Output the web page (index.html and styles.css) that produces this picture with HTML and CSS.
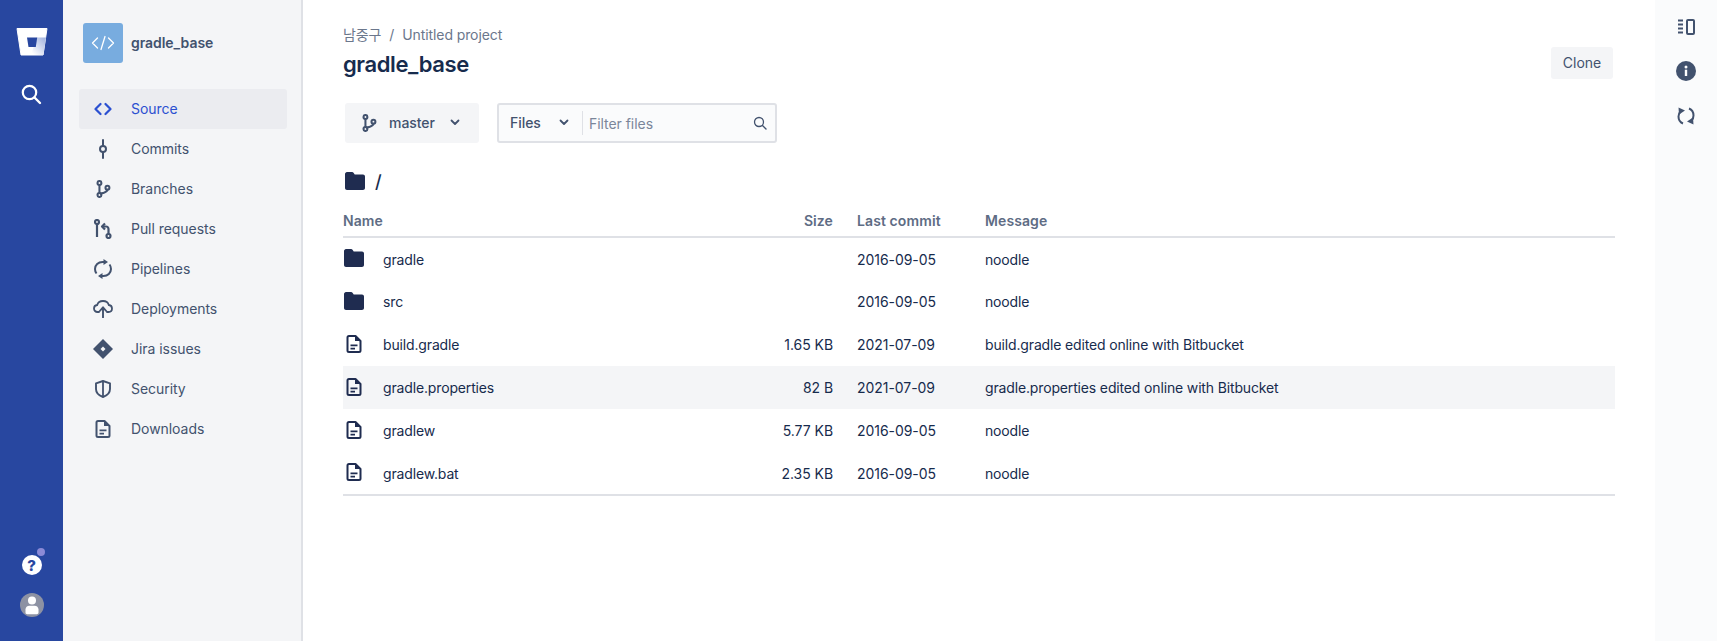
FILE: index.html
```html
<!DOCTYPE html>
<html lang="en">
<head>
<meta charset="utf-8">
<title>gradle_base</title>
<link rel="stylesheet" href="styles.css">
</head>
<body>
<svg class="defs" width="0" height="0">
  <defs>
    <symbol id="folder" viewBox="0 0 20 18"><path d="M0 2.200C0 1 .9 0 2 0h5c.8 0 1.300.4 1.700 1l1 1.600H18c1.100 0 2 .9 2 2V16c0 1.100-.9 2-2 2H2c-1.100 0-2-.9-2-2z" fill="currentColor"/></symbol>
    <symbol id="file" viewBox="0 0 16 18"><path d="M3 1h6.500L14.500 6v9.500c0 .8-.7 1.500-1.500 1.500H3c-.8 0-1.500-.7-1.500-1.500v-13C1.500 1.700 2.200 1 3 1z" fill="none" stroke="currentColor" stroke-width="2" stroke-linejoin="round"/><path d="M9 1v5h5.500z" fill="currentColor"/><path d="M4.500 9.500h7v1.800h-7zM4.500 12.800h4.500v1.800H4.500z" fill="currentColor"/></symbol>
    <symbol id="branch" viewBox="0 0 18 20"><g fill="none" stroke="currentColor" stroke-width="2.300"><circle cx="5" cy="3.200" r="2.200"/><circle cx="5" cy="16.800" r="2.200"/><circle cx="14" cy="8.500" r="2.200"/><path d="M5 5.400v9.200M14 10.700c0 2.800-3 3.300-5 3.800-1.500.4-3 .8-3.600 1"/></g></symbol>
  </defs>
</svg>
<div class="app">
  <nav class="rail">
    <div class="rail-top">
      <svg class="logo" width="32" height="30" viewBox="0 0 32 30">
        <defs><linearGradient id="lg" x1="1" y1="0" x2="0.150" y2="0.950"><stop offset="0" stop-color="#9fb0dd"/><stop offset="1" stop-color="#fff"/></linearGradient></defs>
        <path d="M1 1.500h30l-4 26.500H5z" fill="#fff" stroke="#fff" stroke-linejoin="round"/>
        <path d="M20.800 10.500h9.200l-2.600 17.500H15z" fill="url(#lg)"/>
        <path d="M11 10.500h10.200l-1.400 9.500h-7.300z" fill="#2847a0"/>
      </svg>
      <svg class="rail-search" width="22" height="22" viewBox="0 0 22 22"><circle cx="9.500" cy="9.500" r="6.700" fill="none" stroke="#fff" stroke-width="2.200"/><path d="M14.500 14.500l5.500 5.500" stroke="#fff" stroke-width="2.400" stroke-linecap="round"/></svg>
    </div>
    <div class="rail-bottom">
      <div class="help"><span class="help-q">?</span><span class="help-dot"></span></div>
      <div class="avatar"><svg width="24" height="24" viewBox="0 0 24 24"><circle cx="12" cy="7.500" r="4" fill="#fff"/><path d="M5.500 16.500c0-2.300 1.700-3.700 4-3.700h5c2.300 0 4 1.400 4 3.700v3c0 1-.8 1.700-1.700 1.700H7.200c-1 0-1.700-.7-1.700-1.700z" fill="#fff"/></svg></div>
    </div>
  </nav>

  <aside class="sidebar">
    <div class="repo">
      <div class="repo-icon"><svg width="24" height="16" viewBox="0 0 24 16"><path d="M6.500 3L1.500 8l5 5M17.500 3l5 5-5 5M14 1.500L10 14.500" fill="none" stroke="#fff" stroke-width="1.300" stroke-linecap="round" stroke-linejoin="round"/></svg></div>
      <span class="repo-name">gradle_base</span>
    </div>
    <ul class="menu">
      <li class="menu-item active"><span class="mi"><svg width="18" height="14" viewBox="0 0 18 14"><path d="M6.500 2L1.500 7l5 5M11.500 2l5 5-5 5" fill="none" stroke="currentColor" stroke-width="2.200" stroke-linecap="round" stroke-linejoin="round"/></svg></span>Source</li>
      <li class="menu-item"><span class="mi"><svg width="10" height="20" viewBox="0 0 10 20"><path d="M5 1v5.500M5 13.500V19" stroke="currentColor" stroke-width="2" stroke-linecap="round"/><circle cx="5" cy="10" r="3" fill="none" stroke="currentColor" stroke-width="2"/></svg></span>Commits</li>
      <li class="menu-item"><span class="mi"><svg width="16" height="18" viewBox="0 0 18 20"><use href="#branch"/></svg></span>Branches</li>
      <li class="menu-item"><span class="mi"><svg width="18" height="20" viewBox="0 0 18 20"><g fill="none" stroke="currentColor" stroke-width="2.200"><circle cx="3" cy="3" r="2"/><path d="M3 5v13"/><circle cx="14.500" cy="17" r="2"/><path d="M14.500 15v-5c0-1.500-1-2.500-2.500-2.500H8.500"/><path d="M11 4.500l-3 3 3 3" stroke-linejoin="round"/></g></svg></span>Pull requests</li>
      <li class="menu-item"><span class="mi"><svg width="18" height="20" viewBox="0 0 18 20"><g fill="none" stroke="currentColor" stroke-width="2"><path d="M2.500 14.500C1.500 13.200 1 11.700 1 10c0-4 3.200-7 7.500-7h2"/><path d="M15.500 5.500c1 1.300 1.500 2.800 1.500 4.500 0 4-3.200 7-7.500 7h-2"/></g><path d="M9.500 0l4.500 3-4.500 3zM8.500 14l-4.500 3 4.500 3z" fill="currentColor"/></svg></span>Pipelines</li>
      <li class="menu-item"><span class="mi"><svg width="20" height="18" viewBox="0 0 20 18"><path d="M6 12H4.500C2.500 12 1 10.500 1 8.500 1 6.500 2.500 5.200 4.200 5 4.800 2.700 7 1 10 1s5.200 1.700 5.800 4c1.700.2 3.200 1.500 3.200 3.500 0 2-1.500 3.500-3.500 3.500H14" fill="none" stroke="currentColor" stroke-width="1.800" stroke-linecap="round"/><path d="M10 17.500V9M6.800 11L10 7.300l3.200 3.700" fill="none" stroke="currentColor" stroke-width="1.900" stroke-linecap="round" stroke-linejoin="round"/></svg></span>Deployments</li>
      <li class="menu-item"><span class="mi"><svg width="20" height="20" viewBox="0 0 20 20"><path d="M10 0l10 10-10 10L0 10z" fill="currentColor"/><path d="M10 7.500l2.500 2.500-2.500 2.500L7.500 10z" fill="#f4f5f7"/></svg></span>Jira issues</li>
      <li class="menu-item"><span class="mi"><svg width="16" height="18" viewBox="0 0 16 18"><path d="M8 1l7 2.300V9c0 3.800-2.800 6.500-7 8-4.200-1.500-7-4.200-7-8V3.300z" fill="none" stroke="currentColor" stroke-width="1.900" stroke-linejoin="round"/><path d="M8 1.500v15" stroke="currentColor" stroke-width="1.800"/></svg></span>Security</li>
      <li class="menu-item"><span class="mi"><svg width="16" height="18" viewBox="0 0 16 18"><use href="#file"/></svg></span>Downloads</li>
    </ul>
  </aside>

  <main class="content">
    <div class="crumbs"><span class="crumb-ko">남중구</span><span class="crumb-sep">/</span><span>Untitled project</span></div>
    <div class="title-row">
      <h1 class="title">gradle_base</h1>
      <button class="clone">Clone</button>
    </div>
    <div class="toolbar">
      <div class="branch-btn">
        <svg class="branch-icon" width="16" height="18" viewBox="0 0 18 20"><use href="#branch"/></svg>
        <span class="branch-label">master</span>
        <svg class="chev" width="10" height="7" viewBox="0 0 10 7"><path d="M1.500 1.500L5 5l3.500-3.500" fill="none" stroke="currentColor" stroke-width="1.800" stroke-linecap="round" stroke-linejoin="round"/></svg>
      </div>
      <div class="filter">
        <div class="filter-type"><span>Files</span><svg class="chev" width="10" height="7" viewBox="0 0 10 7"><path d="M1.500 1.500L5 5l3.500-3.500" fill="none" stroke="currentColor" stroke-width="1.800" stroke-linecap="round" stroke-linejoin="round"/></svg></div>
        <div class="filter-input"><span>Filter files</span><svg width="14" height="14" viewBox="0 0 14 14"><circle cx="6" cy="6" r="4.500" fill="none" stroke="#42526e" stroke-width="1.300"/><path d="M9.500 9.500l3.500 3.500" stroke="#42526e" stroke-width="1.400" stroke-linecap="round"/></svg></div>
      </div>
    </div>
    <div class="path"><svg width="20" height="18" viewBox="0 0 20 18"><use href="#folder"/></svg><span>/</span></div>
    <table class="files">
      <thead>
        <tr><th class="c-name">Name</th><th class="c-size">Size</th><th class="c-date">Last commit</th><th class="c-msg">Message</th></tr>
      </thead>
      <tbody>
        <tr><td class="c-name"><span class="cell-name"><span class="ficon"><svg width="20" height="18" viewBox="0 0 20 18"><use href="#folder"/></svg></span>gradle</span></td><td class="c-size"></td><td class="c-date">2016-09-05</td><td class="c-msg">noodle</td></tr>
        <tr><td class="c-name"><span class="cell-name"><span class="ficon"><svg width="20" height="18" viewBox="0 0 20 18"><use href="#folder"/></svg></span>src</span></td><td class="c-size"></td><td class="c-date">2016-09-05</td><td class="c-msg">noodle</td></tr>
        <tr><td class="c-name"><span class="cell-name"><span class="ficon"><svg width="16" height="18" viewBox="0 0 16 18"><use href="#file"/></svg></span>build.gradle</span></td><td class="c-size">1.65 KB</td><td class="c-date">2021-07-09</td><td class="c-msg">build.gradle edited online with Bitbucket</td></tr>
        <tr class="hover"><td class="c-name"><span class="cell-name"><span class="ficon"><svg width="16" height="18" viewBox="0 0 16 18"><use href="#file"/></svg></span>gradle.properties</span></td><td class="c-size">82 B</td><td class="c-date">2021-07-09</td><td class="c-msg">gradle.properties edited online with Bitbucket</td></tr>
        <tr><td class="c-name"><span class="cell-name"><span class="ficon"><svg width="16" height="18" viewBox="0 0 16 18"><use href="#file"/></svg></span>gradlew</span></td><td class="c-size">5.77 KB</td><td class="c-date">2016-09-05</td><td class="c-msg">noodle</td></tr>
        <tr><td class="c-name"><span class="cell-name"><span class="ficon"><svg width="16" height="18" viewBox="0 0 16 18"><use href="#file"/></svg></span>gradlew.bat</span></td><td class="c-size">2.35 KB</td><td class="c-date">2016-09-05</td><td class="c-msg">noodle</td></tr>
      </tbody>
    </table>
  </main>

  <aside class="rightbar">
    <svg width="18" height="16" viewBox="0 0 18 16"><path d="M1 1.500h5M1 5.500h5M1 9.500h5M1 13.500h5" stroke="currentColor" stroke-width="1.800"/><rect x="10" y="1" width="7" height="14" rx="1" fill="none" stroke="currentColor" stroke-width="2"/></svg>
    <svg width="20" height="20" viewBox="0 0 20 20"><circle cx="10" cy="10" r="10" fill="currentColor"/><rect x="8.800" y="8.700" width="2.400" height="6.300" fill="#fff"/><circle cx="10" cy="6" r="1.500" fill="#fff"/></svg>
    <svg width="18" height="18" viewBox="0 0 18 18"><g id="rf"><path d="M6 16.500C3.500 15.500 1.500 12.700 1.500 9.500c0-2 .7-3.700 2-5" fill="none" stroke="currentColor" stroke-width="2"/><path d="M1.500 .5L8 3.500 2 7.500z" fill="currentColor"/></g><use href="#rf" transform="rotate(180 9 9)"/></svg>
  </aside>
</div>
</body>
</html>
```

FILE: styles.css
```css
* { box-sizing: border-box; }
html, body { margin: 0; height: 100%; }
body {
  font-family: Inter, "Noto Sans CJK KR", sans-serif;
  font-size: 14px;
  letter-spacing: -.05px;
  color: #172b4d;
  background: #fff;
  overflow: hidden;
}
.defs { position: absolute; }
.app { display: flex; height: 641px; }

.rail {
  width: 63px;
  flex: none;
  background: #2847a0;
  display: flex;
  flex-direction: column;
  justify-content: space-between;
  align-items: center;
  padding: 27px 0 24px;
}
.rail-top { display: flex; flex-direction: column; align-items: center; gap: 26px; }
.logo { display: block; }
.rail-search { display: block; margin-right: 1px; }
.rail-bottom { display: flex; flex-direction: column; align-items: center; gap: 18px; }
.help {
  position: relative;
  width: 20px;
  height: 20px;
  border-radius: 50%;
  background: #fff;
  display: flex;
  align-items: center;
  justify-content: center;
}
.help-q { color: #2847a0; font-size: 15px; font-weight: 800; line-height: 1; }
.help-dot {
  position: absolute;
  top: -7px;
  right: -3px;
  width: 8px;
  height: 8px;
  border-radius: 50%;
  background: #8b8ad6;
}
.avatar {
  width: 24px;
  height: 24px;
  border-radius: 50%;
  background: #8d92a3;
  overflow: hidden;
}
.avatar svg { display: block; }

.sidebar {
  width: 240px;
  flex: none;
  background: #f4f5f7;
  border-right: 2px solid #dfe1e6;
  padding: 23px 16px 0;
}
.repo { display: flex; align-items: center; gap: 8px; padding-left: 4px; height: 40px; }
.repo-icon {
  width: 40px;
  height: 40px;
  border-radius: 3px;
  background: #78acdf;
  display: flex;
  align-items: center;
  justify-content: center;
}
.repo-name { font-weight: 600; font-size: 14px; color: #42526e; position: relative; top: -1px; }
.menu { list-style: none; margin: 26px 0 0; padding: 0; }
.menu-item {
  display: flex;
  align-items: center;
  height: 40px;
  border-radius: 3px;
  color: #42526e;
  padding: 0 0 2px 11px;
  width: 208px;
}
.menu-item.active { background: #ebecf0; color: #2b50d1; }
.mi { width: 32px; margin: 2px 10px 0 -1px; flex: none; display: flex; align-items: center; justify-content: center; padding-right: 4px; }
.mi svg { display: block; }

.content { flex: 1; min-width: 0; padding: 24px 40px 0 40px; }
.crumbs { display: flex; color: #6b778c; height: 20px; align-items: center; font-size: 14px; letter-spacing: -.1px; }
.crumb-sep { margin: 0 8px; }
.title-row {
  display: flex;
  justify-content: space-between;
  align-items: center;
  height: 34px;
  margin-top: 4px;
}
.title { margin: 0; font-size: 22px; font-weight: 600; color: #172b4d; line-height: 34px; letter-spacing: -.4px; position: relative; top: -1px; }
.clone {
  width: 62px;
  height: 32px;
  border: 0;
  border-radius: 3px;
  background: #f4f5f7;
  color: #42526e;
  font: 14px Inter, sans-serif;
  margin: 0 2px 5px 0;
  padding: 0;
}
.toolbar { display: flex; gap: 18px; margin-top: 21px; padding-left: 2px; }
.branch-btn {
  width: 134px;
  height: 40px;
  background: #f4f5f7;
  border-radius: 3px;
  color: #42526e;
  display: flex;
  align-items: center;
  padding: 0 0 1px 16px;
  font-weight: 500;
}
.branch-icon { margin-right: 12px; }
.branch-label { margin-right: 15px; }
.chev { display: block; }
.filter {
  width: 280px;
  height: 40px;
  border: 2px solid #dfe1e6;
  border-radius: 3px;
  background: #fafbfc;
  display: flex;
  align-items: center;
}
.filter-type {
  display: flex;
  align-items: center;
  width: 84px;
  height: 24px;
  padding: 0 0 1px 11px;
  color: #42526e;
  font-weight: 500;
  gap: 18px;
  border-right: 1px solid #dfe1e6;
  flex: none;
}
.filter-input {
  flex: 1;
  display: flex;
  justify-content: space-between;
  align-items: center;
  color: #7a869a;
  padding: 0 8px 0 6px;
}
.path {
  display: flex;
  align-items: center;
  gap: 10px;
  margin: 27px 0 0 2px;
  height: 22px;
  font-size: 18px;
  font-weight: 500;
  color: #172b4d;
}
.path svg { display: block; color: #1f2c50; }

.files { width: 100%; border-collapse: collapse; margin-top: 20px; table-layout: fixed; border-bottom: 2px solid #dfe1e6; }
.files th {
  height: 25px;
  text-align: left;
  color: #5e6c84;
  font-size: 14px;
  font-weight: 600;
  letter-spacing: .1px;
  padding: 0 0 7px;
  border-bottom: 2px solid #dfe1e6;
}
.files td { height: 43px; padding: 0; color: #172b4d; font-size: 14px; }
.files tr.hover td { background: #f4f5f7; }
.files .c-name { width: 400px; }
.files .c-size { width: 90px; text-align: right; }
.files .c-date { width: 152px; padding-left: 24px; }
.files td.c-name, .files td.c-msg { letter-spacing: -.15px; }
.cell-name { display: flex; align-items: center; }
.ficon { width: 24px; margin-right: 16px; display: flex; justify-content: center; padding-right: 2px; color: #1f2c50; position: relative; top: -1px; }
.ficon svg { display: block; }

.rightbar {
  width: 62px;
  flex: none;
  background: #fafbfc;
  color: #42526e;
  display: flex;
  flex-direction: column;
  align-items: center;
  gap: 26px;
  padding: 19px 0 0;
}
.rightbar svg { display: block; flex: none; }
```
